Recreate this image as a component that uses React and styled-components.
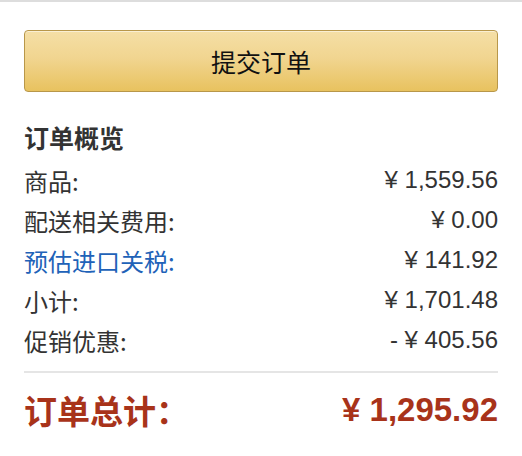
import React from "react"
import styled, { createGlobalStyle } from "styled-components"

const GlobalStyle = createGlobalStyle`
  html, body {
    margin: 0;
    padding: 0;
    background: #fff;
  }
  body {
    font-family: "Liberation Sans", "Noto Sans CJK SC", Arial, sans-serif;
    color: #333;
  }
`

const rows = [
  { label: "商品:", value: "¥ 1,559.56" },
  { label: "配送相关费用:", value: "¥ 0.00" },
  { label: "预估进口关税:", value: "¥ 141.92", link: true },
  { label: "小计:", value: "¥ 1,701.48" },
  { label: "促销优惠:", value: "- ¥ 405.56" },
]

const App = () => (
  <Page>
    <GlobalStyle />
    <SubmitButton type="button">提交订单</SubmitButton>
    <Heading>订单概览</Heading>
    <Rows>
      {rows.map(row => (
        <Row key={row.label}>
          <Label $link={row.link}>{row.label}</Label>
          <Amount>{row.value}</Amount>
        </Row>
      ))}
    </Rows>
    <Divider />
    <TotalRow>
      <TotalLabel>订单总计：</TotalLabel>
      <TotalAmount>¥ 1,295.92</TotalAmount>
    </TotalRow>
  </Page>
)

export default App

const Page = styled.div`
  border-top: 2px solid #dddddd;
  padding: 28px 24px 0;
  display: flex;
  flex-direction: column;
`

const SubmitButton = styled.button`
  height: 62px;
  width: 100%;
  border: 1px solid #b8974a;
  border-radius: 4px;
  background: linear-gradient(to bottom, #f5dfa6 0%, #f1d590 45%, #e8c25f 100%);
  box-shadow: inset 0 1px 0 rgba(255, 255, 255, 0.5);
  font-family: "Noto Sans CJK SC", "Liberation Sans", sans-serif;
  font-size: 25px;
  line-height: 58px;
  color: #111;
  cursor: pointer;
  padding: 0;
`

const Heading = styled.h3`
  margin: 29px 0 0;
  font-family: "Noto Sans CJK SC", sans-serif;
  font-size: 25px;
  font-weight: 700;
  line-height: 32px;
  color: #333;
`

const Rows = styled.div`
  margin-top: 7px;
  display: flex;
  flex-direction: column;
`

const Row = styled.div`
  display: flex;
  justify-content: space-between;
  align-items: center;
  height: 40px;
`

const Label = styled.span`
  font-family: "Noto Sans CJK SC", sans-serif;
  font-size: 24px;
  color: ${props => (props.$link ? "#2162b8" : "#333")};
`

const Amount = styled.span`
  font-family: "Liberation Sans", Arial, sans-serif;
  font-size: 24px;
  color: #333;
`

const Divider = styled.hr`
  margin: 11px 0 0;
  border: 0;
  height: 2px;
  background: #e5e5e5;
`

const TotalRow = styled.div`
  margin-top: 17px;
  display: flex;
  justify-content: space-between;
  align-items: center;
  height: 40px;
  color: #a8331a;
  font-weight: 700;
`

const TotalLabel = styled.span`
  font-family: "Noto Sans CJK SC", sans-serif;
  font-size: 33px;
`

const TotalAmount = styled.span`
  font-family: "Liberation Sans", Arial, sans-serif;
  font-size: 33px;
`
